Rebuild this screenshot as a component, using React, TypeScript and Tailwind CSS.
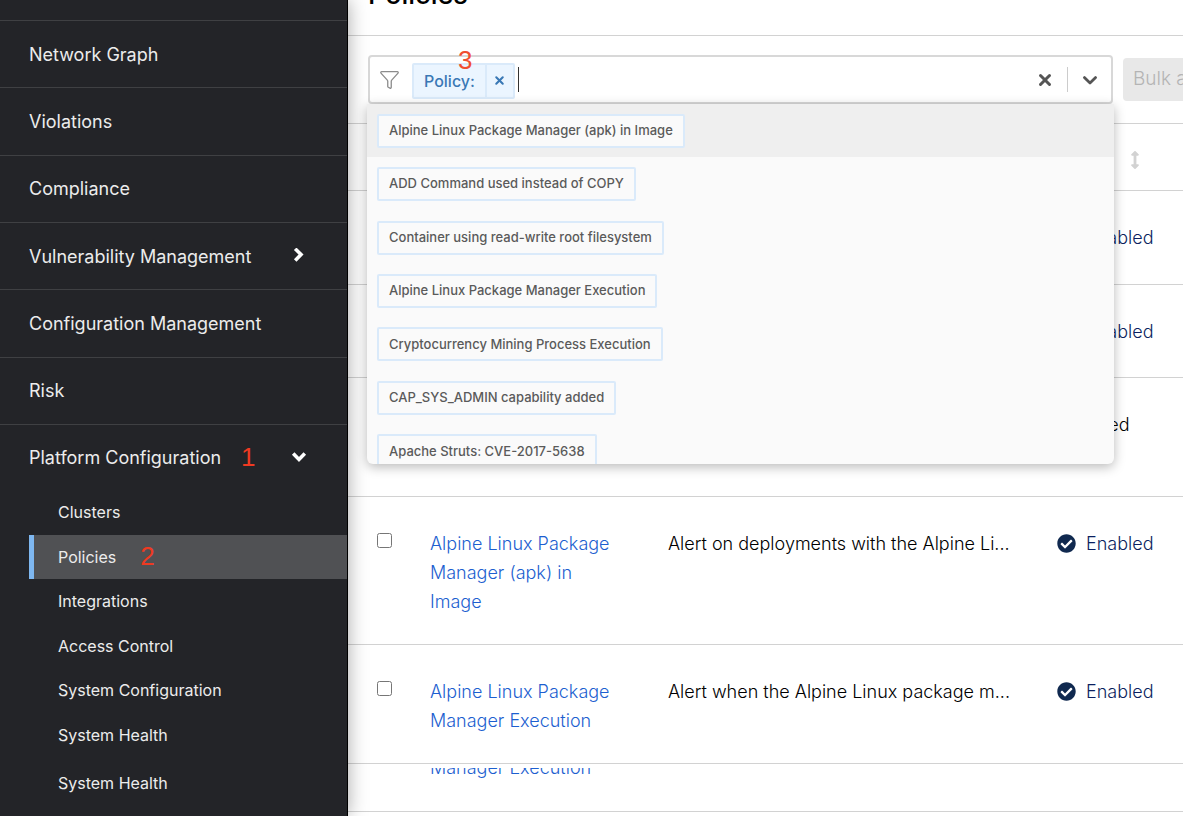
import { Filter, X } from "lucide-react";
import { FaArrowsAltV, FaCheckCircle } from "react-icons/fa";

const topLinks = ["Network Graph", "Violations", "Compliance", "Vulnerability Management", "Configuration Management", "Risk"];
const configLinks = ["Clusters", "Policies", "Integrations", "Access Control", "System Configuration", "System Health"];

const suggestions = [
  "Alpine Linux Package Manager (apk) in Image",
  "ADD Command used instead of COPY",
  "Container using read-write root filesystem",
  "Alpine Linux Package Manager Execution",
  "Cryptocurrency Mining Process Execution",
  "CAP_SYS_ADMIN capability added",
  "Apache Struts: CVE-2017-5638",
];

type Policy = { name: string; description: string; enabled: boolean; height: string };

const policies: Policy[] = [
  { name: "", description: "", enabled: true, height: "h-[94px]" },
  { name: "", description: "", enabled: true, height: "h-[93px]" },
  { name: "", description: "", enabled: false, height: "h-[119px]" },
  {
    name: "Alpine Linux Package Manager (apk) in Image",
    description: "Alert on deployments with the Alpine Li...",
    enabled: true,
    height: "h-[148px]",
  },
  {
    name: "Alpine Linux Package Manager Execution",
    description: "Alert when the Alpine Linux package m...",
    enabled: true,
    height: "h-[119px]",
  },
];

function Chevron({ down = false }: { down?: boolean }) {
  return (
    <svg width="16" height="16" viewBox="0 0 16 16" fill="none" stroke="white" strokeWidth="3.6" aria-hidden="true">
      <path d={down ? "M2.2 3.6 8 9.4l5.8-5.8" : "M4.2 .8 10 6.6 4.2 12.4"} />
    </svg>
  );
}

function Sidebar() {
  return (
    <nav className="flex w-[348px] shrink-0 flex-col overflow-hidden border-r border-black bg-[#232428] text-[#ececec]">
      <div className="h-5 shrink-0" />
      <ul className="grid h-[404px] shrink-0 auto-rows-fr">
        {topLinks.map((label) => (
          <li key={label} className="border-t border-[#3f4043]">
            <a href="#" className="flex h-full items-center justify-between pr-10 pl-[29px] text-[18px]">
              {label}
              {label === "Vulnerability Management" && <Chevron />}
            </a>
          </li>
        ))}
      </ul>
      <button type="button" className="flex h-[66px] shrink-0 items-center border-t border-[#3f4043] pr-10 pl-[29px] text-[18px]">
        Platform Configuration
        <span className="ml-5 font-['Liberation_Sans',sans-serif] text-[26px] text-[#ee3a22]">1</span>
        <span className="ml-auto">
          <Chevron down />
        </span>
      </button>
      <ul className="grid h-[267px] shrink-0 auto-rows-fr text-[16px]">
        {configLinks.map((label) => (
          <li key={label} className="pl-[29px]">
            <a
              href="#"
              className={
                label === "Policies"
                  ? "flex h-full items-center border-l-[5px] border-[#7eb7f0] bg-[#505154] pl-6"
                  : "flex h-full items-center pl-[29px]"
              }
            >
              {label}
              {label === "Policies" && (
                <span className="ml-6 font-['Liberation_Sans',sans-serif] text-[26px] text-[#ee3a22]">2</span>
              )}
            </a>
          </li>
        ))}
      </ul>
      <a href="#" className="mt-1 flex h-11 shrink-0 items-center pl-[58px] text-[16px]">
        System Health
      </a>
    </nav>
  );
}

function SearchBox() {
  return (
    <div className="relative z-10 min-w-0 flex-1">
      <div className="relative flex h-[49px] items-center rounded border-2 border-[#d8d8d8] bg-white pl-[9px]">
        <Filter size={21} strokeWidth={1.5} className="text-[#8c8c8c]" />
        <div className="mt-0.5 ml-3 flex h-9 items-stretch rounded-xs border-2 border-[#daeafa] bg-[#ebf5ff] text-[#3a78b5]">
          <span className="flex items-center px-2.5 text-[16px] font-medium">Policy:</span>
          <button type="button" aria-label="Remove Policy" className="flex w-7 items-center justify-center border-l-2 border-[#daeafa]">
            <X size={13} strokeWidth={3.8} />
          </button>
        </div>
        <span className="ml-[3px] h-[25px] w-px bg-[#333]" />
        <input type="text" aria-label="Filter policies" className="h-full min-w-0 flex-1 px-1 text-[16px] outline-none" />
        <button type="button" aria-label="Clear" className="flex w-9 justify-center text-[#555]">
          <X size={18} strokeWidth={4} />
        </button>
        <span className="ml-1 h-[25px] w-px bg-[#ccc]" />
        <button type="button" aria-label="Show options" className="flex w-[43px] justify-center">
          <svg width="18" height="18" viewBox="0 0 18 18" fill="none" stroke="#555" strokeWidth="2.8" strokeLinecap="round" strokeLinejoin="round">
            <path d="M3.4 6.6 9 12l5.6-5.4" />
          </svg>
        </button>
        <span className="absolute -top-4 left-[88px] font-['Liberation_Sans',sans-serif] text-[26px] text-[#f04e30]">3</span>
      </div>
      <div className="absolute top-[49px] -right-px -left-px h-[360px] overflow-hidden rounded-b-md bg-[#fafafa] shadow-[0_3px_12px_rgba(0,0,0,0.28)]">
        <ul className="grid h-[374px] auto-rows-fr">
          {suggestions.map((label, index) => (
            <li key={label} className={index === 0 ? "flex items-center bg-[#efefef] px-2.5" : "flex items-center px-2.5"}>
              <button
                type="button"
                className="flex h-[34px] items-center rounded-xs border-2 border-[#daeafa] bg-[#fafafa] px-2.5 text-[13px] font-medium whitespace-nowrap text-[#5a5a5a]"
              >
                {label}
              </button>
            </li>
          ))}
        </ul>
      </div>
    </div>
  );
}

function PolicyTable() {
  return (
    <table className="w-full table-fixed border-collapse text-left text-[18px] leading-[29px] font-light">
      <colgroup>
        <col className="w-[82px]" />
        <col className="w-[238px]" />
        <col className="w-[389px]" />
        <col />
      </colgroup>
      <thead>
        <tr className="h-[66px] border-b border-[#d2d2d2]">
          <th />
          <th />
          <th />
          <th className="pt-1.5 pl-[69px]">
            <FaArrowsAltV size={18} className="text-[#d2d2d2]" />
          </th>
        </tr>
      </thead>
      <tbody>
        {policies.map((policy, index) => (
          <tr key={index} className={`${policy.height} border-b border-[#d2d2d2] align-top`}>
            <td className="pt-9 pl-[29px]">
              <input type="checkbox" aria-label={`Select policy ${index + 1}`} className="block size-[15px]" />
            </td>
            <td className="pt-8 pr-10">
              {policy.name && (
                <a href="#" className="text-[#1d5fd0]">
                  {policy.name}
                </a>
              )}
            </td>
            <td className="pt-8 whitespace-nowrap text-black">{policy.description}</td>
            <td className="pt-8">
              {policy.enabled ? (
                <span className="flex items-center gap-2.5 text-[#0b1f60]">
                  <FaCheckCircle size={19} className="text-[#10294f]" />
                  Enabled
                </span>
              ) : (
                "Disabled"
              )}
            </td>
          </tr>
        ))}
        <tr className="h-12 border-b border-[#d2d2d2] align-top">
          <td />
          <td className="pt-1">
            <div className="flex h-[14px] items-end overflow-hidden">
              <a href="#" className="text-[#1d5fd0]">
                Manager Execution
              </a>
            </div>
          </td>
          <td />
          <td />
        </tr>
      </tbody>
    </table>
  );
}

export default function App() {
  return (
    <div className="flex h-screen overflow-hidden bg-white font-['Inter',sans-serif]">
      <div className="relative z-20 flex shadow-[0_0_18px_rgba(0,0,0,0.35)]">
        <Sidebar />
      </div>
      <main className="min-w-0 flex-1 overflow-hidden">
        <div className="w-[calc(100%+120px)]">
          <header className="flex h-9 items-end overflow-hidden border-b border-[#d2d2d2] pb-6 pl-5">
            <h1 className="text-[27px] leading-8 font-medium">Policies</h1>
          </header>
          <div className="flex items-start gap-2.5 border-b border-[#d2d2d2] px-5 py-[19px]">
            <SearchBox />
            <button type="button" disabled className="mt-[3px] h-[43px] w-40 rounded bg-[#e8e8e8] pl-2.5 text-left text-[19px] font-light text-[#b4b4b4]">
              Bulk actions
            </button>
          </div>
          <PolicyTable />
        </div>
      </main>
    </div>
  );
}
